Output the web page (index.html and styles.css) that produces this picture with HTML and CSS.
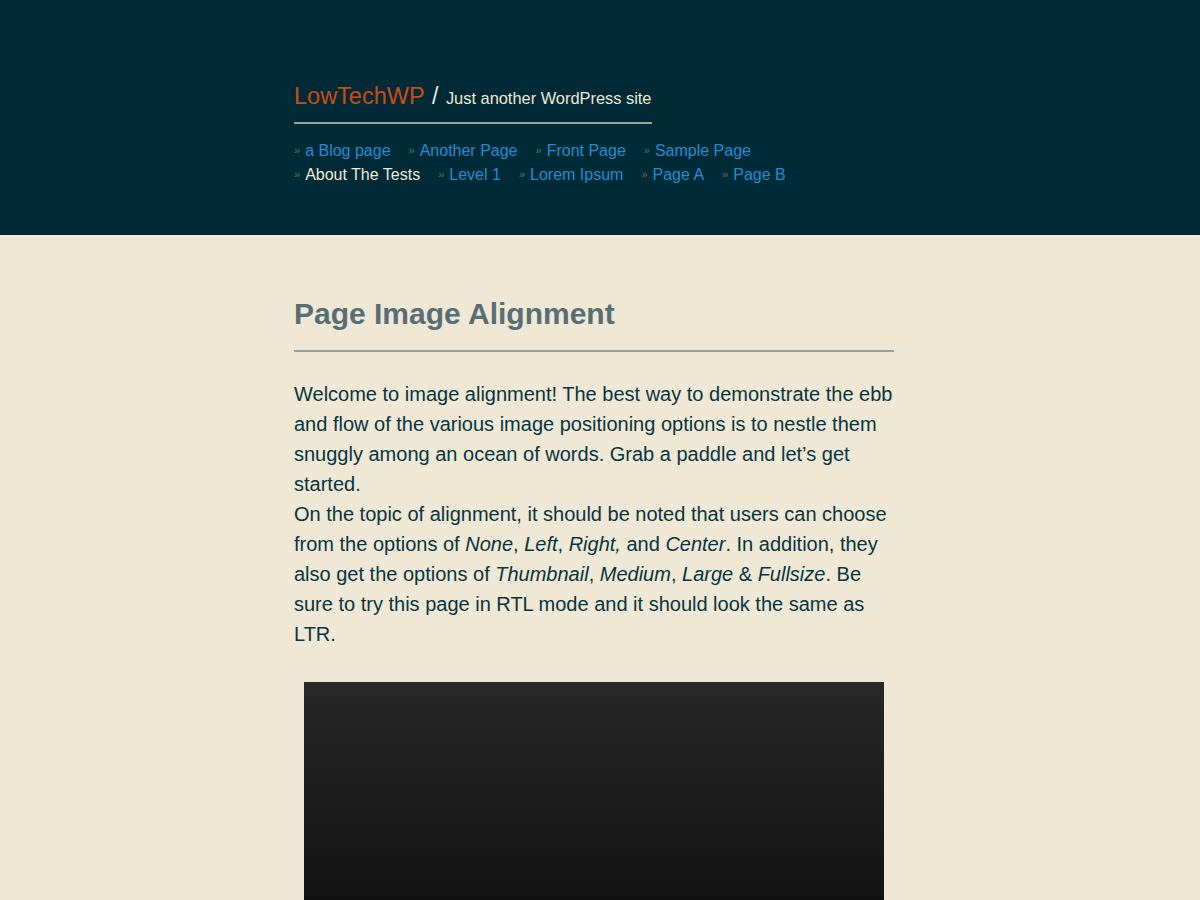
FILE: index.html
```html
<!DOCTYPE html>
<html lang="en">
<head>
<meta charset="utf-8">
<title>Page Image Alignment – LowTechWP</title>
<link rel="stylesheet" href="styles.css">
</head>
<body>
<header class="site-header">
  <div class="wrap">
    <div class="branding">
      <a class="site-title" href="#">LowTechWP</a>
      <span class="sep">/</span>
      <span class="tagline">Just another WordPress site</span>
    </div>
    <nav class="menu">
      <ul>
        <li><a href="#">a Blog page</a></li>
        <li><a href="#">Another Page</a></li>
        <li><a href="#">Front Page</a></li>
        <li><a href="#">Sample Page</a></li>
        <li class="current"><a href="#">About The Tests</a></li>
        <li><a href="#">Level 1</a></li>
        <li><a href="#">Lorem Ipsum</a></li>
        <li><a href="#">Page A</a></li>
        <li><a href="#">Page B</a></li>
      </ul>
    </nav>
  </div>
</header>
<main class="site-main">
  <div class="wrap">
    <h1 class="entry-title">Page Image Alignment</h1>
    <div class="entry-content">
      <p>Welcome to image alignment! The best way to demonstrate the ebb and flow of the various image positioning options is to nestle them snuggly among an ocean of words. Grab a paddle and let’s get started.</p>
      <p>On the topic of alignment, it should be noted that users can choose from the options of <em>None</em>, <em>Left</em>, <em>Right, </em>and <em>Center</em>. In addition, they also get the options of <em>Thumbnail</em>, <em>Medium</em>, <em>Large</em> &amp; <em>Fullsize</em>. Be sure to try this page in RTL mode and it should look the same as LTR.</p>
      <div class="aligncenter photo"></div>
    </div>
  </div>
</main>
</body>
</html>
```

FILE: styles.css
```css
html, body {
  margin: 0;
  padding: 0;
}
body {
  background: #eee8d5;
  color: #073642;
  font-family: "Liberation Sans", Arial, sans-serif;
}
a {
  text-decoration: none;
}
.wrap {
  width: 612px;
  padding-right: 12px;
  box-sizing: border-box;
  margin: 0 auto;
}
.site-header {
  background: #002b36;
  padding: 79px 0 48px;
}
.branding {
  display: inline-block;
  border-bottom: 2px solid #93a1a1;
  padding-bottom: 9px;
  line-height: 34px;
  height: 34px;
  white-space: nowrap;
}
.site-title {
  color: #cb4b16;
  font-size: 23.5px;
}
.sep {
  color: #eee8d5;
  font-size: 23px;
  margin: 0 3px;
}
.tagline {
  color: #eee8d5;
  font-size: 16.4px;
}
.menu ul {
  list-style: none;
  margin: 15px 0 0;
  padding: 0;
  max-width: 560px;
  display: flex;
  flex-wrap: wrap;
  column-gap: 18px;
  font-size: 16px;
  line-height: 24px;
}
.menu li {
  height: 24px;
  line-height: 24px;
}
.menu li::before {
  content: "»";
  color: #586e75;
  font-size: 11px;
  line-height: 1;
  vertical-align: 2px;
  margin-right: 5px;
}
.menu a {
  color: #268bd2;
}
.menu .current a {
  color: #eee8d5;
}
.site-main {
  padding-top: 61px;
}
.entry-title {
  margin: 0;
  font-size: 30px;
  line-height: 36px;
  color: #586e75;
  padding-bottom: 18px;
  border-bottom: 2px solid #93a1a1;
}
.entry-content {
  padding-top: 27px;
  font-size: 20px;
  line-height: 30px;
}
.entry-content p {
  margin: 0;
}
.photo {
  width: 580px;
  height: 420px;
  margin: 33px auto 0;
  background: linear-gradient(#282828, #111111 55%, #0c0c0c);
}
```
